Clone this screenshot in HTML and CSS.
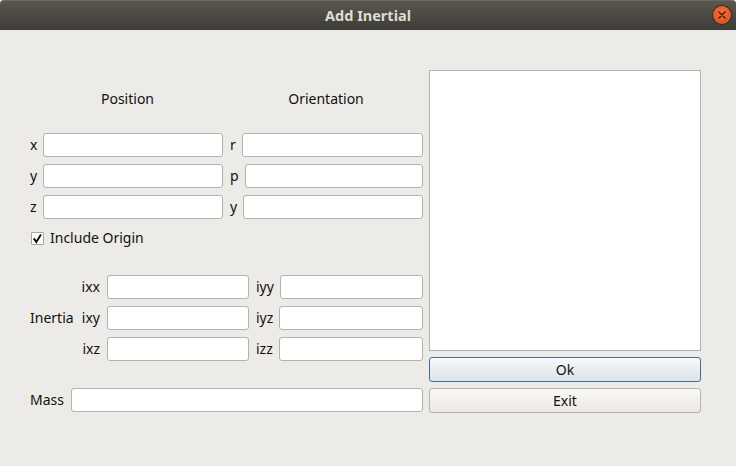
FILE: index.html
```html
<!DOCTYPE html>
<html>
<head>
<meta charset="utf-8">
<link rel="stylesheet" href="styles.css">
</head>
<body>
<div class="window">
  <div class="titlebar">
    <span class="title">Add Inertial</span>
    <span class="close">
      <svg width="18" height="18" viewBox="0 0 18 18"><path d="M6 6 L12 12 M12 6 L6 12" stroke="#3a1c10" stroke-width="1.4" stroke-linecap="round"/></svg>
    </span>
  </div>
  <div class="content">
    <div class="left">
      <div class="headers">
        <div class="head">Position</div>
        <div class="head">Orientation</div>
      </div>
      <div class="pose">
        <div class="pair"><span class="lbl">x</span><span class="field"></span></div>
        <div class="pair"><span class="lbl">r</span><span class="field"></span></div>
        <div class="pair"><span class="lbl">y</span><span class="field"></span></div>
        <div class="pair"><span class="lbl">p</span><span class="field"></span></div>
        <div class="pair"><span class="lbl">z</span><span class="field"></span></div>
        <div class="pair"><span class="lbl">y</span><span class="field"></span></div>
      </div>
      <label class="check"><span class="box">
        <svg width="11" height="11" viewBox="0 0 11 11"><path d="M1.8 5.4 L4.3 9 L9 1.5" fill="none" stroke="#111" stroke-width="2"/></svg>
      </span>Include Origin</label>
      <div class="inertia">
        <div class="ilabel">Inertia</div>
        <span class="sub">ixx</span><span class="field"></span>
        <div class="pair"><span class="lbl">iyy</span><span class="field"></span></div>
        <span class="sub">ixy</span><span class="field"></span>
        <div class="pair"><span class="lbl">iyz</span><span class="field"></span></div>
        <span class="sub">ixz</span><span class="field"></span>
        <div class="pair"><span class="lbl">izz</span><span class="field"></span></div>
      </div>
      <div class="mass"><span class="lbl">Mass</span><span class="field"></span></div>
    </div>
    <div class="right">
      <div class="list"></div>
      <button class="btn ok">Ok</button>
      <button class="btn">Exit</button>
    </div>
  </div>
</div>
</body>
</html>
```
FILE: styles.css
```css
html, body {
  margin: 0;
  padding: 0;
  background: #e9e9e9;
}
.window {
  width: 736px;
  height: 466px;
  background: #edebe7;
  font-family: "Noto Sans", "Open Sans", sans-serif;
  font-size: 14px;
  color: #111;
  border-radius: 4px 4px 0 0;
  overflow: hidden;
}
.titlebar {
  height: 30px;
  background: linear-gradient(#5a574e, #3d3c37);
  border-top: 1px solid #6b685e;
  box-sizing: border-box;
  display: flex;
  align-items: center;
  justify-content: center;
  position: relative;
}
.title {
  font-weight: bold;
  font-size: 14.5px;
  color: #dfdbd2;
  margin-top: -1px;
}
.close {
  position: absolute;
  right: 5px;
  top: 5px;
  width: 18px;
  height: 18px;
  border-radius: 50%;
  background: radial-gradient(circle at 50% 35%, #f2703f, #dc4a18);
  box-shadow: 0 0 0 1px #3a2a20;
  display: flex;
}
.content {
  display: flex;
  gap: 6px;
  padding: 40px 0 0 30px;
}
.left {
  width: 393px;
  display: flex;
  flex-direction: column;
}
.headers {
  display: grid;
  grid-template-columns: 195px 202px;
  padding-top: 20px;
  height: 18px;
  line-height: 18px;
  margin-bottom: 25px;
}
.head {
  text-align: center;
}
.pose {
  display: grid;
  grid-template-columns: 193px 193px;
  column-gap: 7px;
  row-gap: 7px;
}
.pair {
  display: flex;
  align-items: center;
  gap: 6px;
}
.lbl {
  line-height: 24px;
}
.field {
  flex: 1;
  height: 24px;
  box-sizing: border-box;
  background: #fff;
  border: 1px solid #b5b1ab;
  border-radius: 3px;
  display: block;
}
.check {
  display: flex;
  align-items: center;
  gap: 6px;
  margin-top: 10px;
  height: 18px;
  line-height: 18px;
}
.box {
  width: 13px;
  height: 13px;
  box-sizing: border-box;
  background: #fff;
  border: 1px solid #a9a59f;
  border-radius: 1px;
  display: flex;
  align-items: center;
  justify-content: center;
  margin-left: 1px;
}
.inertia {
  margin-top: 28px;
  display: grid;
  grid-template-columns: 45px 18px 142px 167px;
  column-gap: 7px;
  row-gap: 7px;
  align-items: center;
}
.ilabel {
  grid-row: 1 / 4;
  grid-column: 1;
  line-height: 24px;
}
.sub {
  text-align: right;
  line-height: 24px;
  white-space: nowrap;
  justify-self: end;
}
.mass {
  margin-top: 27px;
  display: flex;
  align-items: center;
  gap: 7px;
}
.right {
  width: 272px;
  display: flex;
  flex-direction: column;
  gap: 6px;
}
.list {
  height: 281px;
  box-sizing: border-box;
  background: #fff;
  border: 1px solid #b5b1ab;
}
.btn {
  height: 25px;
  box-sizing: border-box;
  font-family: inherit;
  font-size: 14px;
  color: #111;
  border: 1px solid #b5b1ab;
  border-radius: 3px;
  background: linear-gradient(#faf9f8, #ebe8e4);
  padding: 0;
}
.btn.ok {
  border-color: #3d6f9e;
  background: linear-gradient(#f6f8f9, #dee3e8);
}
```
